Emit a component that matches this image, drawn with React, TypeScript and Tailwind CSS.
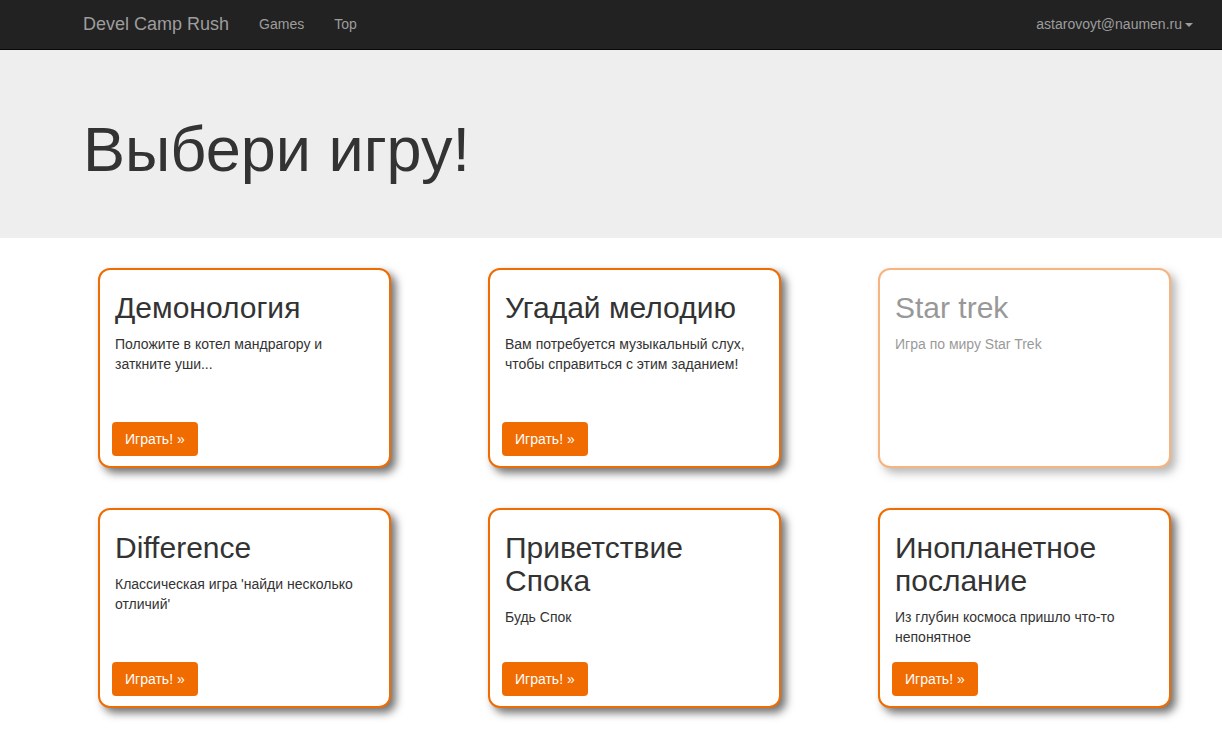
import React from 'react';

const games = [
  { title: 'Демонология', desc: 'Положите в котел мандрагору и заткните уши...', active: true },
  { title: 'Угадай мелодию', desc: 'Вам потребуется музыкальный слух, чтобы справиться с этим заданием!', active: true },
  { title: 'Star trek', desc: 'Игра по миру Star Trek', active: false },
  { title: 'Difference', desc: "Классическая игра 'найди несколько отличий'", active: true },
  { title: 'Приветствие Спока', desc: 'Будь Спок', active: true },
  { title: 'Инопланетное послание', desc: 'Из глубин космоса пришло что-то непонятное', active: true },
];

const GameCard: React.FC<{ title: string; desc: string; active: boolean }> = ({ title, desc, active }) => (
  <div
    className={`flex flex-col w-[293px] h-[200px] rounded-[12px] border-2 border-[#f06b00] bg-white shadow-[5px_5px_8px_rgba(0,0,0,0.55)] pl-[15px] pr-[10px] pt-[21px] pb-[10px] ${
      active ? '' : 'opacity-50'
    }`}
  >
    <h2 className="text-[30px] leading-[33px] text-[#333] mb-[10px] pr-[10px]">{title}</h2>
    <p className="text-[14px] leading-[20px] text-[#333]">{desc}</p>
    {active && (
      <button className="mt-auto self-start -ml-[3px] h-[34px] px-[13px] rounded-[4px] bg-[#f06b00] text-white text-[14px]">
        Играть! »
      </button>
    )}
  </div>
);

export default function App() {
  return (
    <div className="min-h-screen bg-white font-['Liberation_Sans',Arial,sans-serif]">
      <nav className="h-[50px] bg-[#222] border-b border-[#080808] flex items-center pl-[83px] pr-[29px]">
        <span className="text-[18px] text-[#9d9d9d]">Devel Camp Rush</span>
        <span className="ml-[30px] text-[14px] text-[#9d9d9d]">Games</span>
        <span className="ml-[30px] text-[14px] text-[#9d9d9d]">Top</span>
        <span className="ml-auto text-[14px] text-[#9d9d9d] flex items-center">
          astarovoyt@naumen.ru
          <span className="ml-[3px] inline-block w-0 h-0 border-l-[4px] border-r-[4px] border-t-[4px] border-l-transparent border-r-transparent border-t-[#9d9d9d]" />
        </span>
      </nav>
      <div className="bg-[#eee] pt-[65px] pb-[54px] pl-[83px]">
        <h1 className="text-[63px] leading-[69px] text-[#333]">Выбери игру!</h1>
      </div>
      <div className="grid grid-cols-[293px_293px_293px] gap-x-[97px] gap-y-[40px] pl-[98px] pt-[30px] pb-[30px]">
        {games.map((g, i) => (
          <GameCard key={i} {...g} />
        ))}
      </div>
    </div>
  );
}
